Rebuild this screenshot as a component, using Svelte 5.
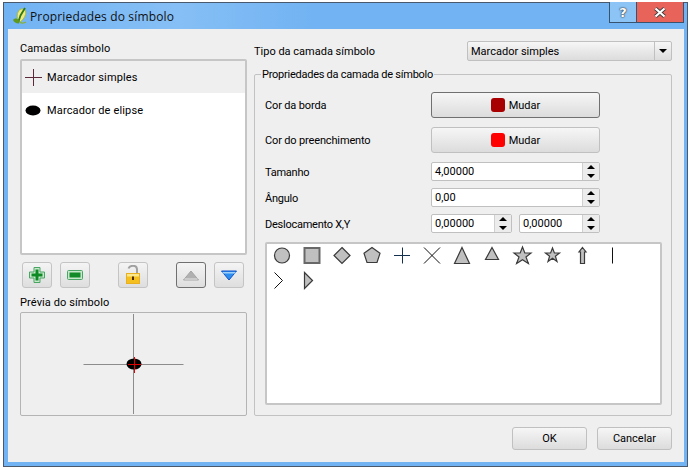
<script>
	const markers = [
		'circle', 'square', 'diamond', 'pentagon', 'cross', 'x', 'triangle', 'smalltri',
		'star', 'smallstar', 'arrow', 'line', 'chevron', 'halftri'
	];
</script>

{#snippet spin(value)}
	<div class="spin">
		<span class="spin-value">{value}</span>
		<span class="spin-arrows">
			<span class="spin-btn"><i class="up"></i></span>
			<span class="spin-btn"><i class="down"></i></span>
		</span>
	</div>
{/snippet}

<div class="window">
	<header class="titlebar">
		<svg class="logo" viewBox="0 0 18 18">
			<path d="M10 2C14 1.500 15.500 4 14.500 7.500c-.8 3-3 6-5.500 7.500C6.500 13 5.500 10 6.500 6.500 7 4.500 8.500 2.500 10 2z" fill="#f0ea80" stroke="#a8c040" stroke-width="1" />
			<path d="M14 1 9.500 8.500 7 16" fill="none" stroke="#2f7a18" stroke-width="1.800" />
			<path d="M2 13c1.500-2 4-2 5.500 0 1 1.500 1 2.500 0 3.500-2.500 0-4.500-1.500-5.500-3.500z" fill="#5f9a1f" />
			<path d="M9 15.500c2 .8 4 .8 6-.5" fill="none" stroke="#8ab030" stroke-width="1.200" />
		</svg>
		<span class="title">Propriedades do símbolo</span>
		<div class="caption-btns">
			<span class="help">?</span>
			<span class="close">
				<svg viewBox="0 0 14 11" width="14" height="11"><path d="M2.500 1.500l9 8M11.500 1.500l-9 8" stroke="#3c3c3c" stroke-width="3.800" /><path d="M2.500 1.500l9 8M11.500 1.500l-9 8" stroke="#fff" stroke-width="2.200" /></svg>
			</span>
		</div>
	</header>

	<div class="body">
		<div class="columns">
			<section class="left">
				<div class="caption">Camadas símbolo</div>
				<div class="layers">
					<div class="layer selected">
						<svg width="17" height="17" viewBox="0 0 17 17"><path d="M0 8.500h17M8.500 0v17" stroke="#5d2a3c" stroke-width="1" /></svg>
						<span>Marcador simples</span>
					</div>
					<div class="layer">
						<svg width="17" height="17" viewBox="0 0 17 17"><ellipse cx="8" cy="8.500" rx="7.500" ry="5" fill="#000" /></svg>
						<span>Marcador de elipse</span>
					</div>
				</div>

				<div class="tools">
					<button class="tool">
						<svg width="18" height="18" viewBox="0 0 18 18">
							<path d="M6 1.500h6v4.500h4.500v6H12v4.500H6V12H1.500V6H6z" fill="#c8e8cc" stroke="#4aa564" stroke-width="1" stroke-linejoin="round" />
							<path d="M7.500 3.500h3v4h4v3h-4v4h-3v-4h-4v-3h4z" fill="#0d8a24" />
						</svg>
					</button>
					<button class="tool">
						<svg width="18" height="18" viewBox="0 0 18 18">
							<rect x="1.500" y="4.500" width="15" height="9" rx="1" fill="#c8e8cc" stroke="#4aa564" />
							<rect x="3.500" y="6.500" width="11" height="5" fill="#128a28" />
						</svg>
					</button>
					<button class="tool lock">
						<svg width="18" height="20" viewBox="0 0 18 20">
							<path d="M4.500 3.500C5.500 1 7 .8 9 .8c2.200 0 4 1.500 4 4V9" fill="none" stroke="#a0a0a0" stroke-width="2" />
							<rect x="2.500" y="8.500" width="13" height="10" fill="#f4c020" stroke="#e8b020" />
							<rect x="3" y="9" width="12" height="2.500" fill="#fbe88a" />
							<rect x="8" y="11.500" width="2" height="3.500" fill="#4a2a00" />
						</svg>
					</button>
					<button class="tool focused">
						<svg width="18" height="11" viewBox="0 0 18 11"><path d="M9 1 16.500 10h-15z" fill="#b0b0b0" stroke="#a4a4a4" stroke-linejoin="round" /><path d="M2.500 9h13" stroke="#d4d4d4" stroke-width="1.500" /></svg>
					</button>
					<button class="tool">
						<svg width="18" height="11" viewBox="0 0 18 11"><path d="M1.500 1h15L9 10z" fill="#2e8ef0" stroke="#0f4fc8" stroke-linejoin="round" /><path d="M2.500 2h13v1.500h-13z" fill="#9fd0fa" /></svg>
					</button>
				</div>

				<div class="caption preview-caption">Prévia do símbolo</div>
				<div class="preview">
					<svg width="225" height="102" viewBox="0 0 225 102">
						<path d="M62.500 51.500h100M112.500 1v100" stroke="#8c8c8c" stroke-width="1" />
						<ellipse cx="113" cy="51" rx="7.500" ry="5.500" fill="#000" />
						<path d="M107 51.500h13M113.500 44v16" stroke="#e00000" stroke-width="1" />
					</svg>
				</div>
			</section>

			<section class="right">
				<div class="type-row">
					<span>Tipo da camada símbolo</span>
					<div class="combo">
						<span class="combo-text">Marcador simples</span>
						<span class="combo-arrow"><i class="down"></i></span>
					</div>
				</div>

				<fieldset class="group">
					<legend>Propriedades da camada de símbolo</legend>
					<div class="form">
						<span class="tall">Cor da borda</span>
						<button class="color-btn focused"><i class="swatch dark"></i>Mudar</button>
						<span class="tall">Cor do preenchimento</span>
						<button class="color-btn"><i class="swatch red"></i>Mudar</button>
						<span class="label">Tamanho</span>
						{@render spin('4,00000')}
						<span class="label">Ângulo</span>
						{@render spin('0,00')}
						<span class="label">Deslocamento X,Y</span>
						<div class="pair">
							{@render spin('0,00000')}
							{@render spin('0,00000')}
						</div>
					</div>

					<div class="markers">
						{#each markers as m}
							<svg class="marker" viewBox="0 1 30 25" width="30" height="25">
								<g class="shape">
									{#if m === 'circle'}
										<circle cx="15" cy="12.500" r="7.500" />
									{:else if m === 'square'}
										<rect x="7.500" y="5" width="15" height="15" class="thick" />
									{:else if m === 'diamond'}
										<path d="M15 4.500l8 8-8 8-8-8z" />
									{:else if m === 'pentagon'}
										<path d="M15 4.500l8 5.800-3 9.200H10l-3-9.200z" />
									{:else if m === 'cross'}
										<path d="M7 12.500h16M15.500 4.500v16" class="navy" />
									{:else if m === 'x'}
										<path d="M7 4.500l16 16M23 4.500l-16 16" class="thin" />
									{:else if m === 'triangle'}
										<path d="M15 4.500l7.500 16h-15z" />
									{:else if m === 'smalltri'}
										<path d="M15 4.500l6.500 12h-13z" />
									{:else if m === 'star'}
										<path d="M15.500 4l2.300 6h6.200l-5 4 2.400 6.500-5.900-3.800-5.900 3.800 2.400-6.500-5-4h6.200z" />
									{:else if m === 'smallstar'}
										<path d="M15.500 5l1.900 5h5.100l-4.100 3.200 1.600 5.300-4.500-3.200-4.500 3.200 1.600-5.300-4.100-3.200h5.100z" />
									{:else if m === 'arrow'}
										<path d="M15.500 4.500l3.500 4.500h-1.500v11.500h-4V9h-1.500z" />
									{:else if m === 'line'}
										<path d="M15.500 4.500v16" class="thin" />
									{:else if m === 'chevron'}
										<path d="M7.500 4.500l8 8-8 8" class="thin" />
									{:else}
										<path d="M7.500 4.500l8 8-8 8z" />
									{/if}
								</g>
							</svg>
						{/each}
					</div>
				</fieldset>
			</section>
		</div>

		<footer class="actions">
			<button class="action">OK</button>
			<button class="action">Cancelar</button>
		</footer>
	</div>
</div>

<style>
	:global(body) {
		background: #fff;
	}

	.window {
		box-sizing: border-box;
		width: 685px;
		height: 465px;
		margin: 2px 0 0 3px;
		border: 1px solid #4a5a6c;
		background: #72b3f3;
		padding: 0 3px 4px 4px;
		display: flex;
		flex-direction: column;
		font-family: Roboto, sans-serif;
		font-size: 11px;
		color: #000;
	}

	.titlebar {
		height: 26px;
		flex: none;
		display: flex;
		align-items: center;
		position: relative;
		background: linear-gradient(90deg, #72b3f3 0, #86bff5 25%, #72b3f3 45%);
	}

	.logo {
		width: 18px;
		height: 18px;
		margin-left: 3px;
	}

	.title {
		margin-left: 1px;
		font-family: "Open Sans", sans-serif;
		font-size: 12px;
		letter-spacing: 0.15px;
		color: #111;
	}

	.caption-btns {
		position: absolute;
		top: -1px;
		right: 0;
		display: flex;
		height: 21px;
	}

	.help,
	.close {
		box-sizing: border-box;
		display: flex;
		align-items: center;
		justify-content: center;
		border: 1px solid #39536e;
		border-top: 0;
	}

	.help {
		width: 27px;
		border-right: 0;
		background: #8cc4f6;
		font: bold 13px "DejaVu Sans", sans-serif;
		color: #fff;
		text-shadow: 0 0 2px #222, 0 0 1px #222;
	}

	.close {
		width: 48px;
		background: #e8635a;
	}

	.body {
		flex: 1;
		min-height: 0;
		background: #efefef;
		padding: 12px 12px 11px 12px;
		display: flex;
		flex-direction: column;
	}

	.columns {
		display: flex;
		gap: 7px;
	}

	.left {
		width: 227px;
		flex: none;
	}

	.caption {
		height: 18px;
		line-height: 16px;
		letter-spacing: 0.1px;
	}

	.layers {
		box-sizing: border-box;
		height: 196px;
		border: 2px solid #c6c6c6;
		border-radius: 2px;
		background: #fff;
	}

	.layer {
		height: 34px;
		display: flex;
		align-items: center;
		gap: 5px;
		padding-left: 3px;
		letter-spacing: 0.15px;
	}

	.layer.selected {
		height: 32px;
		background: #efefef;
	}

	.tools {
		display: flex;
		margin: 7px 0 0 2px;
		gap: 8px;
	}

	.tool {
		box-sizing: border-box;
		width: 30px;
		height: 26px;
		padding: 0;
		display: flex;
		align-items: center;
		justify-content: center;
		border: 1px solid #c4c4c4;
		border-radius: 3px;
		background: linear-gradient(#f4f4f4, #dedede);
	}

	.tool.lock {
		margin: 0 20px;
	}

	.tool.focused,
	.color-btn.focused {
		border-color: #707070;
	}

	.caption.preview-caption {
		height: 17px;
		margin-top: 7px;
	}

	.preview {
		box-sizing: border-box;
		height: 104px;
		border: 1px solid #b4b4b4;
		border-radius: 2px;
	}

	.preview svg {
		display: block;
	}

	.right {
		flex: 1;
		min-width: 0;
	}

	.type-row {
		display: flex;
		align-items: center;
		justify-content: space-between;
		height: 20px;
	}

	.combo {
		box-sizing: border-box;
		width: 205px;
		height: 20px;
		display: flex;
		align-items: center;
		border: 1px solid #c0c0c0;
		border-radius: 2px;
		background: linear-gradient(#f6f6f6, #dcdcdc);
	}

	.combo-text {
		flex: 1;
		padding-left: 3px;
	}

	.combo-arrow {
		width: 16px;
		height: 100%;
		display: flex;
		align-items: center;
		justify-content: center;
		border-left: 1px solid #c0c0c0;
	}

	i.up,
	i.down {
		display: block;
		width: 0;
		height: 0;
		border-left: 4px solid transparent;
		border-right: 4px solid transparent;
	}

	i.up {
		border-bottom: 4px solid #000;
	}

	i.down {
		border-top: 4px solid #000;
	}

	.group {
		box-sizing: border-box;
		height: 350px;
		margin: 5px 0 0;
		padding: 10px 9px 10px 10px;
		border: 1px solid #c2c2c2;
		border-radius: 2px;
		min-width: 0;
	}

	legend {
		padding: 2px 1px 0;
		margin-left: -4px;
		line-height: 14px;
		letter-spacing: -0.25px;
	}

	.form {
		display: grid;
		grid-template-columns: 166px 169px;
		grid-template-rows: 28px 28px 19px 19px 19px;
		row-gap: 7px;
		align-items: center;
	}

	.tall {
		align-self: start;
		padding-top: 1px;
		line-height: 26px;
		letter-spacing: -0.15px;
	}

	.label {
		padding-top: 2px;
		letter-spacing: -0.25px;
	}

	.color-btn {
		box-sizing: border-box;
		align-self: start;
		height: 26px;
		padding: 0;
		display: flex;
		align-items: center;
		justify-content: center;
		gap: 4px;
		border: 1px solid #c0c0c0;
		border-radius: 3px;
		background: linear-gradient(#f6f6f6, #dcdcdc);
		font: inherit;
		color: #000;
	}

	.swatch {
		width: 14px;
		height: 14px;
		border-radius: 3px;
	}

	.swatch.dark {
		background: #a80000;
	}

	.swatch.red {
		background: #ff0000;
	}

	.spin {
		box-sizing: border-box;
		height: 19px;
		display: flex;
		border: 1px solid #c0c0c0;
		border-radius: 2px;
		background: #fff;
	}

	.spin-value {
		flex: 1;
		padding-left: 3px;
		line-height: 17px;
	}

	.spin-arrows {
		width: 16px;
		display: flex;
		flex-direction: column;
		border-left: 1px solid #d0d0d0;
		background: #ececec;
	}

	.spin-btn {
		flex: 1;
		display: flex;
		align-items: center;
		justify-content: center;
	}

	.pair {
		display: grid;
		grid-template-columns: 81px 81px;
		gap: 7px;
	}

	.markers {
		box-sizing: border-box;
		height: 163px;
		margin-top: 9px;
		border: 2px solid #c6c6c6;
		border-radius: 2px;
		background: #fff;
		display: grid;
		grid-template-columns: repeat(12, 30px);
		align-content: start;
	}

	.marker {
		display: block;
	}

	.shape {
		fill: #c0c0c0;
		stroke: #3a3a3a;
		stroke-width: 1.2;
	}

	.shape .thick {
		stroke: #686868;
		stroke-width: 2;
	}

	.shape .navy {
		fill: none;
		stroke: #13304f;
		stroke-width: 1;
	}

	.shape .thin {
		fill: none;
		stroke: #111;
		stroke-width: 1;
	}

	.actions {
		display: flex;
		justify-content: flex-end;
		gap: 10px;
		margin-top: 11px;
	}

	.action {
		box-sizing: border-box;
		width: 75px;
		height: 23px;
		padding: 0;
		border: 1px solid #c0c0c0;
		border-radius: 3px;
		background: linear-gradient(#f6f6f6, #dcdcdc);
		font: inherit;
		color: #000;
	}
</style>
